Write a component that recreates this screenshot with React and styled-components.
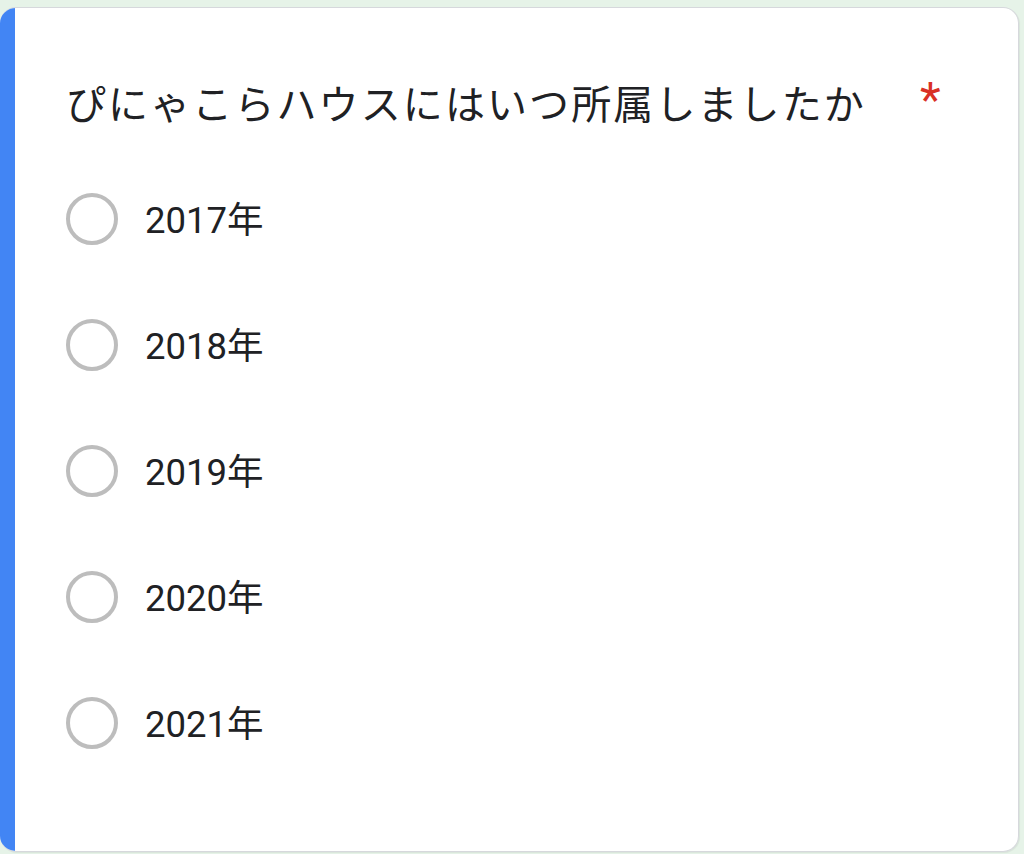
import React from 'react'
import styled, { createGlobalStyle } from 'styled-components'

const GlobalStyle = createGlobalStyle`
  html, body {
    margin: 0;
    padding: 0;
    background: #e6f3e8;
  }
  body {
    font-family: Roboto, "Noto Sans CJK JP", sans-serif;
  }
`

const options = ['2017年', '2018年', '2019年', '2020年', '2021年']

const App = () => {
  return (
    <>
      <GlobalStyle />
      <Page>
        <Card>
          <Accent />
          <Body>
            <TitleRow>
              <Title>ぴにゃこらハウスにはいつ所属しましたか</Title>
              <Required>*</Required>
            </TitleRow>
            <OptionList>
              {options.map((label) => (
                <Option key={label}>
                  <Radio />
                  <Label>{label}</Label>
                </Option>
              ))}
            </OptionList>
          </Body>
        </Card>
      </Page>
    </>
  )
}

export default App

const Page = styled.div`
  box-sizing: border-box;
  width: 1024px;
  height: 854px;
  padding: 7px 5px 2px 0;
`

const Card = styled.section`
  display: flex;
  height: 100%;
  box-sizing: border-box;
  background: #fff;
  border: 1.5px solid #d6d8dc;
  border-left: none;
  border-radius: 16px;
  overflow: hidden;
  box-shadow: 1px 1px 1px rgba(0, 0, 0, 0.06);
`

const Accent = styled.div`
  flex: 0 0 15px;
  background: #4285f4;
`

const Body = styled.div`
  flex: 1;
  display: flex;
  flex-direction: column;
  padding: 70px 0 0 51px;
`

const TitleRow = styled.div`
  display: flex;
  align-items: flex-start;
  height: 48px;
`

const Title = styled.h1`
  margin: 0;
  font-family: "Noto Sans CJK JP", sans-serif;
  font-weight: 400;
  font-size: 40px;
  line-height: 48px;
  letter-spacing: 2.1px;
  color: #202124;
`

const Required = styled.span`
  margin-left: 54px;
  margin-top: -2px;
  font-family: Roboto, sans-serif;
  font-size: 48px;
  line-height: 48px;
  color: #d93025;
`

const OptionList = styled.div`
  display: flex;
  flex-direction: column;
  margin-top: 30px;
`

const Option = styled.label`
  display: flex;
  align-items: center;
  height: 126px;
`

const Radio = styled.span`
  box-sizing: border-box;
  width: 52px;
  height: 52px;
  border: 4px solid #bdbdbd;
  border-radius: 50%;
  flex-shrink: 0;
`

const Label = styled.span`
  margin-left: 27px;
  font-family: Roboto, "Noto Sans CJK JP", sans-serif;
  font-size: 36.5px;
  color: #202124;
  padding-bottom: 4px;
`
